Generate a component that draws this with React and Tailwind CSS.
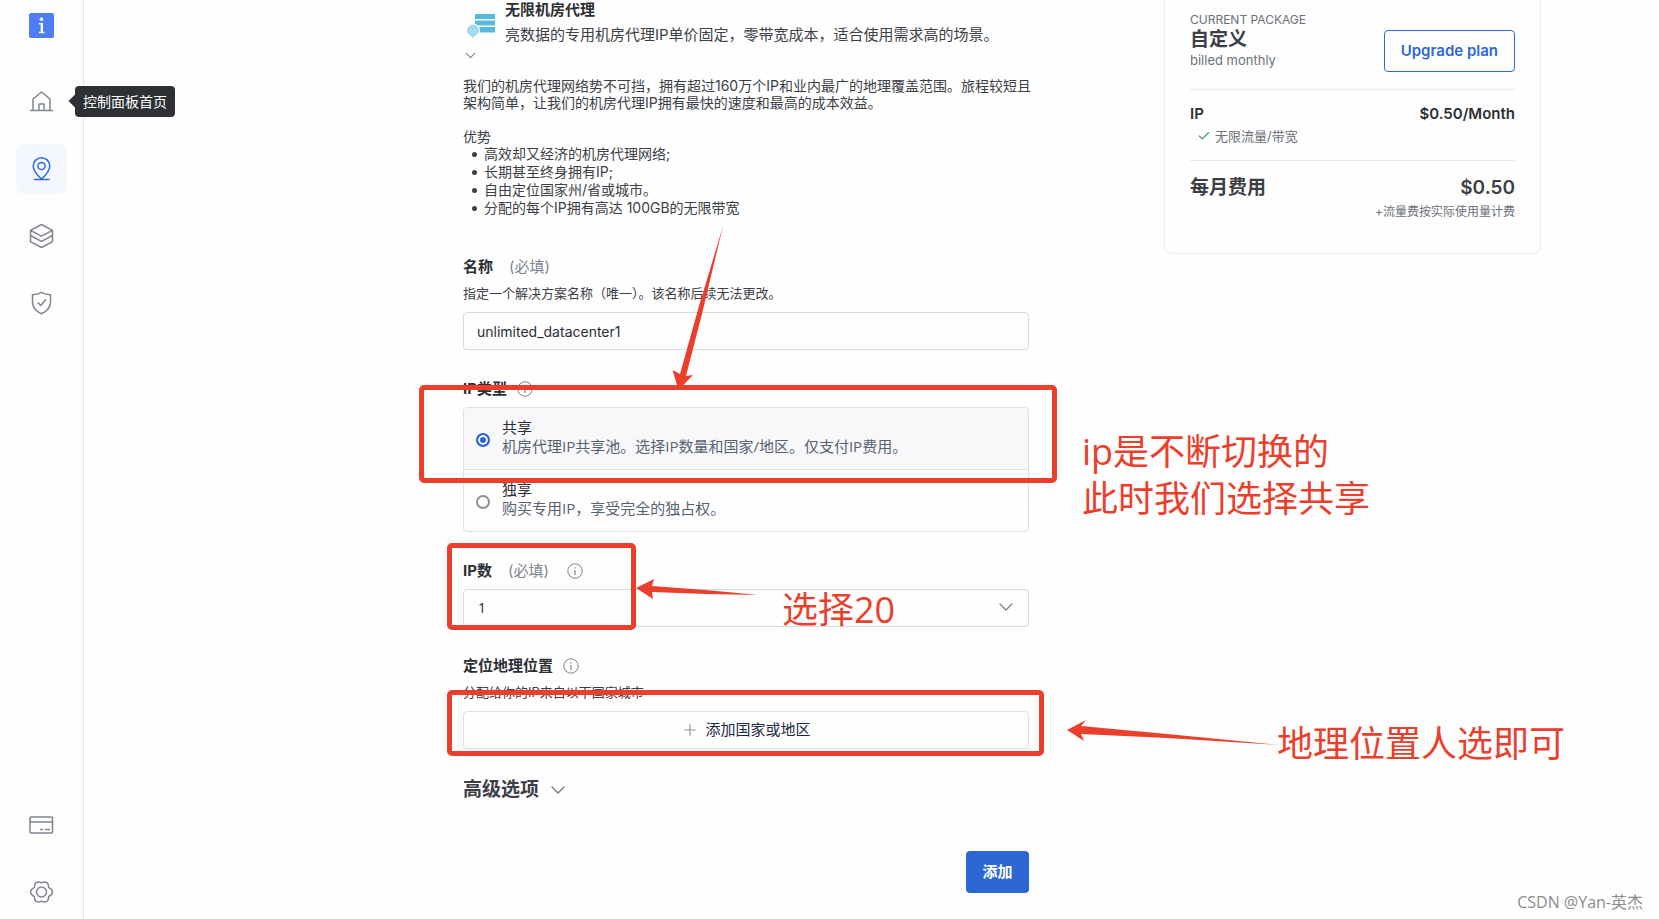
import { useState } from 'react';
import { Check, ChevronDown, Plus } from 'lucide-react';

const perks = [
  '高效却又经济的机房代理网络;',
  '长期甚至终身拥有IP;',
  '自由定位国家州/省或城市。',
  '分配的每个IP拥有高达 100GB的无限带宽',
];

const ipTypes = [
  { id: 'shared', title: '共享', desc: '机房代理IP共享池。选择IP数量和国家/地区。仅支付IP费用。' },
  { id: 'dedicated', title: '独享', desc: '购买专用IP，享受完全的独占权。' },
];

function NavIcon({ children }) {
  return (
    <svg width="27" height="26" viewBox="-0.5 0 27 26" fill="none" stroke="currentColor" strokeWidth="1.5" strokeLinejoin="round" strokeLinecap="round" aria-hidden="true">
      {children}
    </svg>
  );
}

function HomeIcon() {
  return (
    <NavIcon>
      <path d="M2 21.500h22M4.500 21.500V10L13 3l8.500 7v11.500M10.500 21.500V15h5v6.500" />
    </NavIcon>
  );
}

function PinIcon() {
  return (
    <NavIcon>
      <path d="M13 23C8 18.500 4.700 14.500 4.700 10a8.300 8.300 0 0 1 16.600 0C21.300 14.500 18 18.500 13 23ZM6 23.500h14.500" />
      <circle cx="13" cy="10" r="3.600" />
    </NavIcon>
  );
}

function LayersIcon() {
  return (
    <NavIcon>
      <path d="M13 1.500 24 7.300v11.400L13 24.500 2 18.700V7.300ZM2 7.300l11 5.900 11-5.900M2 12.500l11 5.900 11-5.900" />
    </NavIcon>
  );
}

function ShieldIcon() {
  return (
    <NavIcon>
      <path d="M13 2.300c2.600 1.500 5.600 2.300 9 2.500V12c0 5.500-3.300 9.300-9 11.800C7.300 21.300 4 17.500 4 12V4.800c3.400-.2 6.400-1 9-2.500Z" />
      <path d="m9.500 12.700 2.800 2.800 4.700-5.700" />
    </NavIcon>
  );
}

function CardIcon() {
  return (
    <NavIcon>
      <rect x="1.500" y="5" width="22.500" height="16" rx="1" />
      <path d="M1.500 10H24M12 17.500h2M17 17.500h4" />
    </NavIcon>
  );
}

function GearIcon() {
  return (
    <NavIcon>
      <path d="M13 4Q15.500 2 18.500 3.600Q20.200 5 20.200 8.600Q23.800 10 24 13Q23.800 16 20.200 17.400Q20.200 21 18.500 22.400Q15.500 24 13 22Q10.500 24 7.500 22.400Q5.800 21 5.800 17.400Q2.200 16 2 13Q2.200 10 5.800 8.600Q5.800 5 7.500 3.600Q10.500 2 13 4Z" />
      <circle cx="13" cy="13" r="5" />
    </NavIcon>
  );
}

function NavLink({ label, active, children }) {
  return (
    <a
      href="#"
      aria-label={label}
      className={`flex h-[50px] w-[51px] items-center justify-center rounded-lg ${active ? 'bg-[#f4f8fe] text-[#2e69d9]' : 'text-[#808590]'}`}
    >
      {children}
    </a>
  );
}

function Sidebar() {
  return (
    <aside className="flex w-21 shrink-0 flex-col items-center justify-between border-r border-[#e3e4e6] pt-[13px] pb-[2px]">
      <nav className="flex flex-col items-center gap-[17px]">
        <a href="#" aria-label="Bright Data" className="mb-[22px] flex h-[25px] w-[25px] items-center justify-center rounded-xs bg-[#4f7ef4]">
          <svg width="9" height="17" viewBox="0 0 9 17" fill="#fff" aria-hidden="true">
            <path d="M4.500 0l2.200 2.200-2.200 2.200-2.200-2.200ZM2 6h4v8.800h1.500V16.200H2v-1.400h1.700V7.400H2Z" />
          </svg>
        </a>
        <div className="relative">
          <NavLink label="控制面板首页"><HomeIcon /></NavLink>
          <div role="tooltip" className="absolute top-[9px] left-[59px] z-10 rounded-sm bg-[#2d3135] px-2 text-sm leading-[31px] whitespace-nowrap text-white">
            <span className="absolute top-[9px] -left-1 h-3 w-3 rotate-45 bg-[#2d3135]" />
            <span className="relative">控制面板首页</span>
          </div>
        </div>
        <NavLink label="代理" active><PinIcon /></NavLink>
        <NavLink label="数据集"><LayersIcon /></NavLink>
        <NavLink label="安全"><ShieldIcon /></NavLink>
      </nav>
      <div className="flex flex-col gap-[17px]">
        <NavLink label="账单"><CardIcon /></NavLink>
        <NavLink label="设置"><GearIcon /></NavLink>
      </div>
    </aside>
  );
}

function InfoIcon() {
  return (
    <svg width="16" height="16" viewBox="0 0 16 16" fill="none" stroke="#7d828b" aria-hidden="true">
      <circle cx="8" cy="8" r="7.200" />
      <path d="M8 7v5M8 4.200v1.300" strokeWidth="1.200" />
    </svg>
  );
}

function Required() {
  return <span className="font-normal text-[#81868e]">(必填)</span>;
}

function RedBox({ className }) {
  return <div className={`pointer-events-none absolute z-10 rounded-[5px] border-5 border-[#eb3f2c] ${className}`} />;
}

function Arrow({ width, height, d, className }) {
  return (
    <svg width={width} height={height} className={`pointer-events-none absolute z-10 ${className}`} fill="#eb3f2c" aria-hidden="true">
      <path d={d} />
    </svg>
  );
}

function Note({ className, children }) {
  return (
    <p className={`pointer-events-none absolute z-10 font-['Open_Sans','Noto_Sans_CJK_SC',sans-serif] text-4xl leading-[47px] whitespace-nowrap text-[#eb3f2c] ${className}`}>
      {children}
    </p>
  );
}

function ProductIntro() {
  return (
    <section className="text-[#3c4046]">
      <div className="flex">
        <svg width="30" height="27" viewBox="0 0 30 27" className="mt-[13px] mr-2 ml-1 shrink-0" aria-hidden="true">
          <path fill="#58b9e0" d="M8 1h20v5H8ZM8 7.500h20v5H8ZM8 14h20v5.500H8Z" />
          <path fill="#a3daf1" stroke="#fefefe" strokeWidth="2" paintOrder="stroke" d="M6 11.500a6 6 0 0 1 6 6c0 3-2.500 4-6 7.500-3.500-3.500-6-4.500-6-7.500a6 6 0 0 1 6-6Z" />
        </svg>
        <div className="text-[15px] leading-5 whitespace-nowrap">
          <h2 className="font-bold text-[#2b2f34]">无限机房代理</h2>
          <p className="mt-[5px]">亮数据的专用机房代理IP单价固定，零带宽成本，适合使用需求高的场景。</p>
        </div>
      </div>
      <button type="button" aria-label="收起" className="-ml-px flex h-5 items-center text-[#7d828b]">
        <ChevronDown size={17} strokeWidth={1.5} />
      </button>
      <div className="mt-3 text-sm leading-[17px] whitespace-nowrap">
        <p>
          我们的机房代理网络势不可挡，拥有超过160万个IP和业内最广的地理覆盖范围。旅程较短且
          <br />
          架构简单，让我们的机房代理IP拥有最快的速度和最高的成本效益。
        </p>
        <p className="mt-[17px]">优势</p>
        <ul className="leading-[18px]">
          {perks.map((perk) => (
            <li key={perk} className="flex items-center gap-[7px] pl-[9px]">
              <span className="h-[5px] w-[5px] rounded-full bg-[#3c4046]" />
              {perk}
            </li>
          ))}
        </ul>
      </div>
    </section>
  );
}

function SolutionForm() {
  const [name, setName] = useState('unlimited_datacenter1');
  const [ipType, setIpType] = useState('shared');
  const [count, setCount] = useState('1');

  return (
    <form className="max-w-[566px] min-w-0 flex-1 text-[15px] leading-5 text-[#2b2f34]" onSubmit={(e) => e.preventDefault()}>
      <ProductIntro />

      <div className="mt-10">
        <label htmlFor="name" className="flex gap-4 font-bold">
          名称 <Required />
        </label>
        <p className="mt-[6px] text-[13px] text-[#3c4046]">指定一个解决方案名称（唯一）。该名称后续无法更改。</p>
        <input
          id="name"
          value={name}
          onChange={(e) => setName(e.target.value)}
          className="mt-[9px] block h-[38px] w-full rounded-sm border border-[#d5d9e2] px-[13px] text-sm"
        />
      </div>

      <div className="relative mt-[29px]">
        <div id="ip-type" className="flex items-center gap-[10px] font-bold">
          IP类型 <InfoIcon />
        </div>
        <div role="radiogroup" aria-labelledby="ip-type" className="mt-2 divide-y divide-[#dcdfe8] overflow-hidden rounded-sm border border-[#dcdfe8]">
          {ipTypes.map((type) => (
            <label key={type.id} className={`box-content flex h-[61px] items-center gap-3 px-3 leading-[19px] ${ipType === type.id ? 'bg-[#f8f8fb]' : ''}`}>
              <input
                type="radio"
                name="ipType"
                value={type.id}
                checked={ipType === type.id}
                onChange={() => setIpType(type.id)}
                className="mt-[3px] h-[14px] w-[14px] shrink-0 appearance-none rounded-full border-2 border-[#8d909d] checked:border-[#2a62d8] checked:bg-[#2a62d8] checked:shadow-[inset_0_0_0_2px_white]"
              />
              <span className="pb-[3px] font-['Open_Sans','Noto_Sans_CJK_SC',sans-serif]">
                {type.title}
                <span className="block text-[#566270]">{type.desc}</span>
              </span>
            </label>
          ))}
        </div>
        <RedBox className="top-[6px] -right-7 -left-11 h-[98px]" />
        <Arrow width={52} height={164} d="M51 0 30 88 14 150 21 149 6.500 164 .5 144 8 148 27 80Z" className="-top-[153px] left-[209px]" />
        <Note className="top-[49px] left-[619px]">
          ip是不断切换的
          <br />
          此时我们选择共享
        </Note>
      </div>

      <div className="relative mt-[29px]">
        <label htmlFor="count" className="flex items-center font-bold">
          <span className="mr-4">IP数</span>
          <span className="mr-[18px]"><Required /></span>
          <InfoIcon />
        </label>
        <div className="relative mt-2">
          <select
            id="count"
            value={count}
            onChange={(e) => setCount(e.target.value)}
            className="block h-[38px] w-full appearance-none rounded-sm border border-[#d5d9e2] px-[14px] font-['Open_Sans',sans-serif] text-sm"
          >
            <option>1</option>
            <option>10</option>
            <option>20</option>
          </select>
          <ChevronDown size={24} strokeWidth={1.25} className="pointer-events-none absolute top-[6px] right-[11px] text-[#7d828b]" />
        </div>
        <RedBox className="-top-[18px] -left-4 h-[87px] w-[189px]" />
        <Arrow width={123} height={22} d="M0 10 18 1 16 8 70 12 122 17 70 16 16 14 17 21Z" className="top-[17px] left-[173px]" />
        <Note className="top-[25px] left-[319px]">选择20</Note>
      </div>

      <div className="relative mt-[29px]">
        <div className="flex items-center gap-[10px] font-bold">
          定位地理位置 <InfoIcon />
        </div>
        <p className="mt-[6px] text-[13px] text-[#3c4046]">分配给你的IP来自以下国家城市</p>
        <button type="button" className="mt-[9px] flex h-[38px] w-full items-center justify-center gap-[6px] rounded-sm border border-[#dcdfe8] text-[#1b2740]">
          <Plus size={18} strokeWidth={1.5} className="text-[#8c95a3]" />
          添加国家或地区
        </button>
        <RedBox className="top-[34px] -right-[15px] -left-4 h-[66px]" />
        <Arrow width={215} height={26} d="M0 10 19 0 14 6 100 14 214 25 100 18 14 14 17 21Z" className="top-[64px] left-[604px]" />
        <Note className="top-[64px] left-[814px]">地理位置人选即可</Note>
      </div>

      <button type="button" className="mt-[27px] flex items-center gap-[7px] text-[19px] leading-7 font-bold text-[#3c4046]">
        高级选项
        <ChevronDown size={24} strokeWidth={1.25} className="text-[#6d727a]" />
      </button>

      <div className="mt-[47px] flex justify-end">
        <button type="submit" className="h-[42px] w-[63px] rounded-sm bg-[#2d67d3] font-bold text-white">添加</button>
      </div>
    </form>
  );
}

function PackageCard() {
  return (
    <aside className="w-[377px] shrink-0 self-start rounded-b-lg border border-t-0 border-[#ebecf0] px-[25px] pb-[31px] text-[#3c4046]">
      <div className="flex items-start justify-between border-b border-[#e8e9ec] pt-3 pb-[17px]">
        <div className="leading-4 text-[#6b7078]">
          <p className="text-xs leading-4">CURRENT PACKAGE</p>
          <p className="text-[19px] leading-6 font-bold text-[#3c4046]">自定义</p>
          <p className="text-[13px] leading-4">billed monthly</p>
        </div>
        <button type="button" className="mt-[18px] h-[42px] rounded-sm border border-[#2d67d3] px-4 text-[15px] font-semibold text-[#2d67d3]">
          Upgrade plan
        </button>
      </div>
      <div className="border-b border-[#e8e9ec] pt-[14px] pb-[14px]">
        <div className="flex justify-between text-[15px] leading-5 font-semibold text-[#2b2f34]">
          <span>IP</span>
          <span>$0.50/Month</span>
        </div>
        <p className="mt-[2px] flex items-center gap-1 pl-[7px] text-[13px] leading-5 text-[#6b7078]">
          <Check size={14} strokeWidth={2} className="text-[#3f8f85]" />
          无限流量/带宽
        </p>
      </div>
      <div className="flex justify-between pt-[15px] text-[19px] leading-6 font-bold">
        <span>每月费用</span>
        <span className="font-semibold">$0.50</span>
      </div>
      <p className="mt-[2px] text-right text-xs leading-5 text-[#6b7078]">+流量费按实际使用量计费</p>
    </aside>
  );
}

export default function App() {
  return (
    <div className="relative flex min-h-screen overflow-hidden bg-[#fefefe] font-['Inter','Noto_Sans_CJK_SC',sans-serif]">
      <Sidebar />
      <main className="flex flex-1 gap-[135px] pl-[379px]">
        <SolutionForm />
        <PackageCard />
      </main>
      <p className="absolute right-4 bottom-[7px] font-['Open_Sans','Noto_Sans_CJK_SC',sans-serif] text-base leading-5 text-[#8c8c8c]">CSDN @Yan-英杰</p>
    </div>
  );
}
